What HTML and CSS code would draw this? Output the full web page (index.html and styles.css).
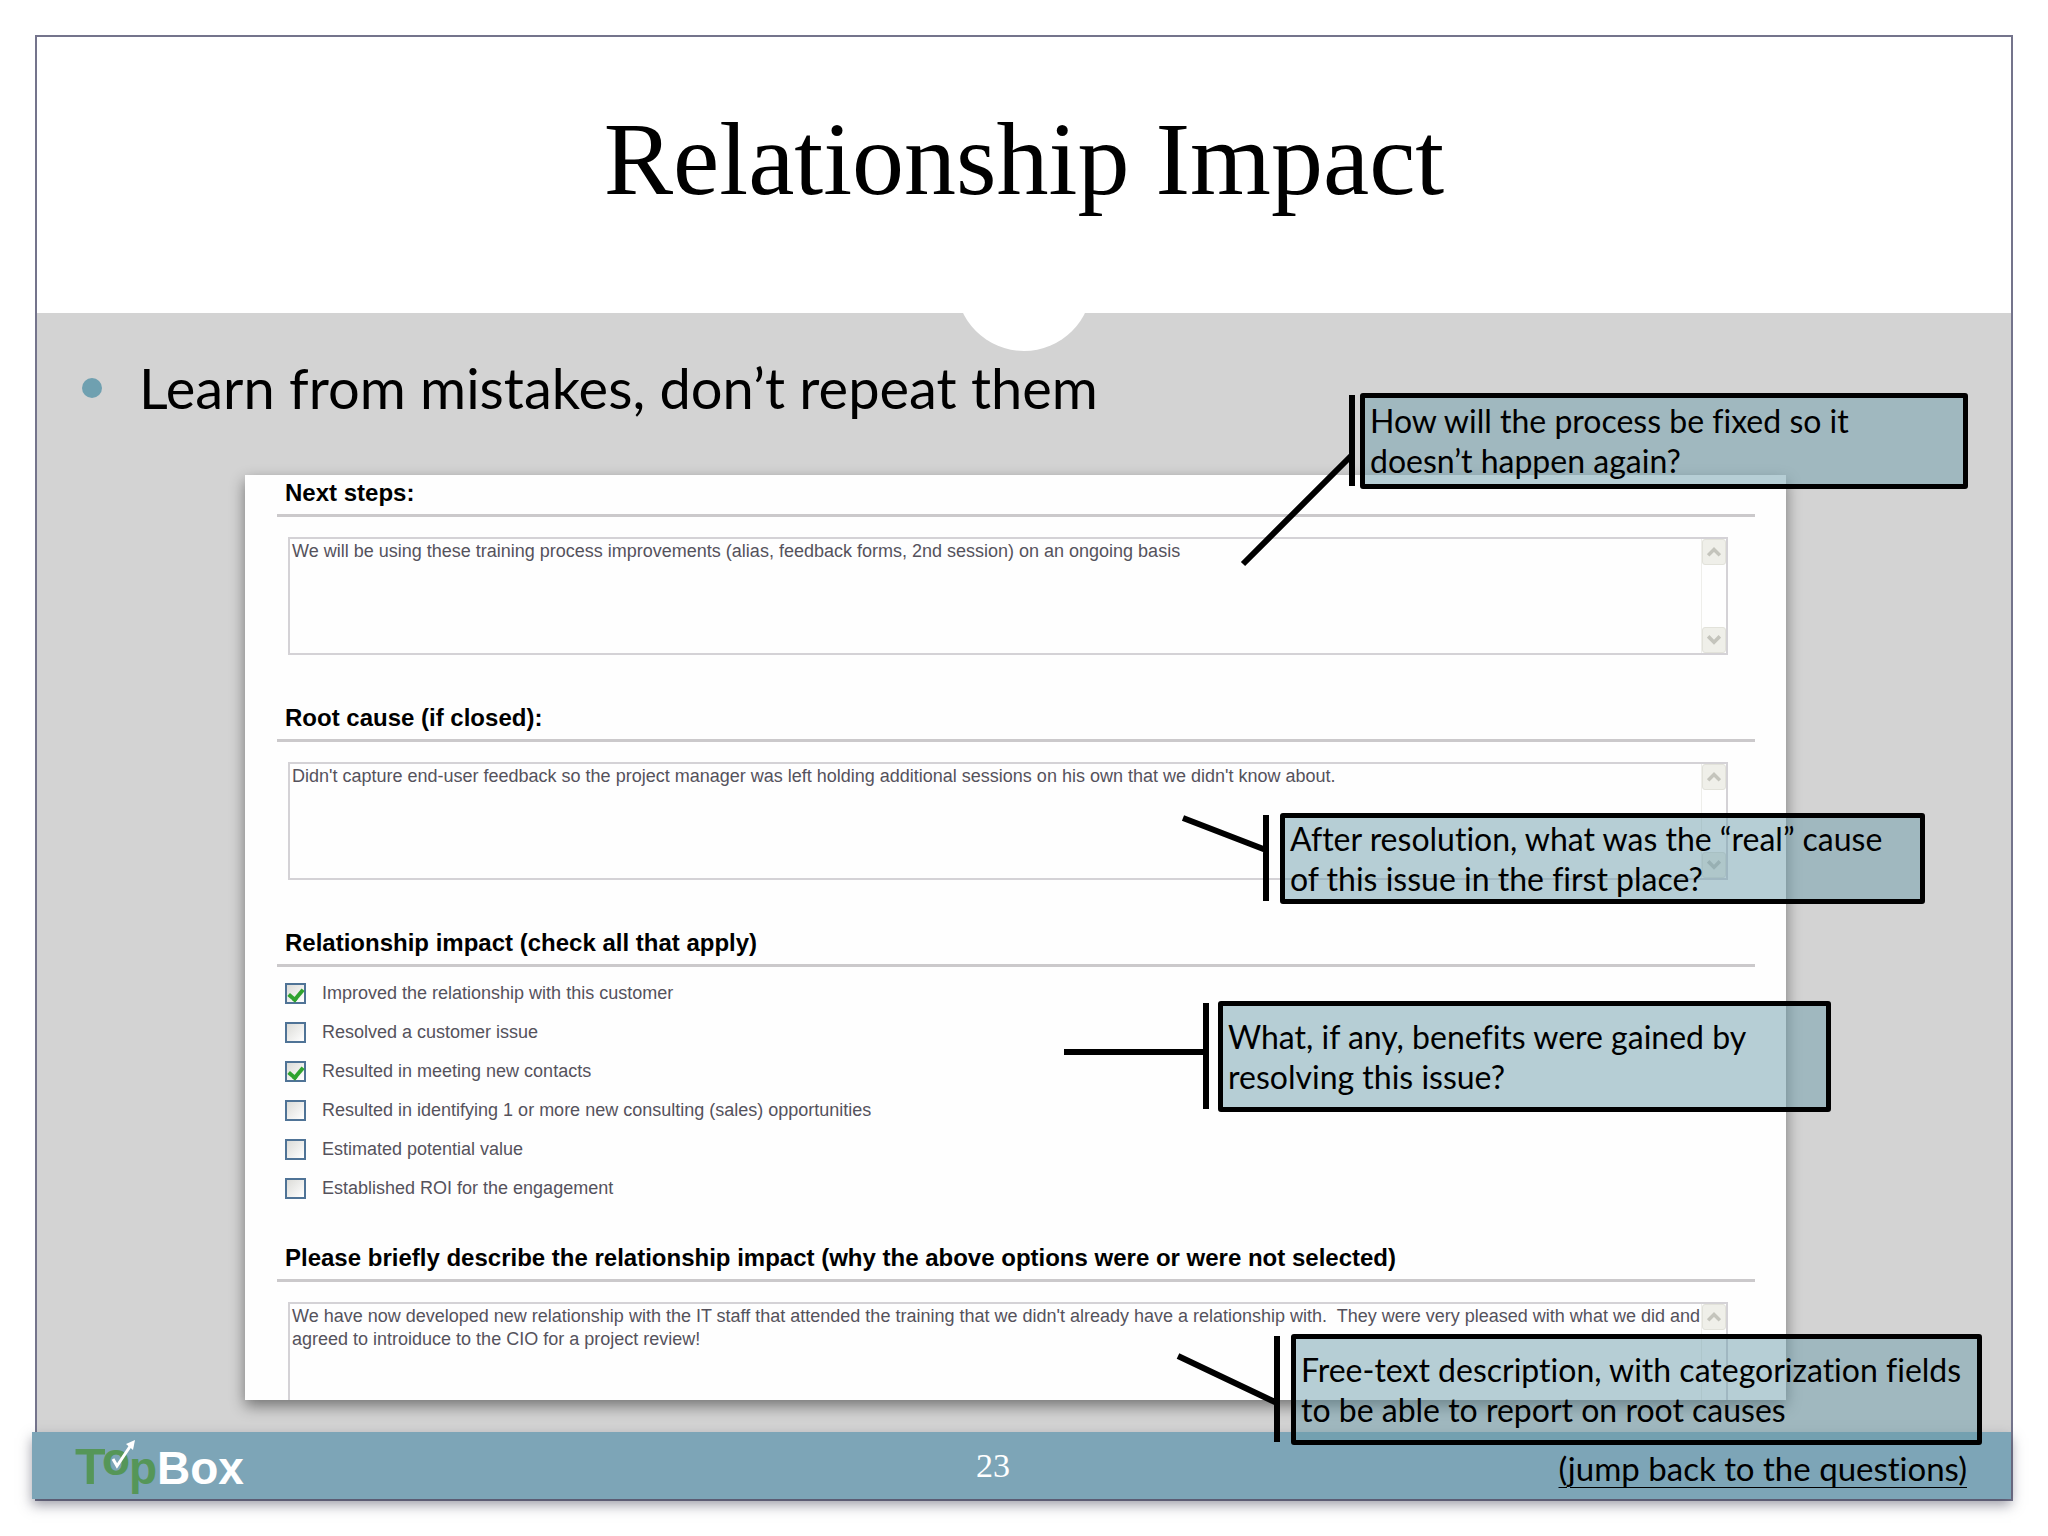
FILE: index.html
```html
<!DOCTYPE html>
<html lang="en">
  <head>
    <meta charset="UTF-8">
    <meta name="viewport" content="width=device-width, initial-scale=1.0">
    <title>Relationship Impact</title>
    <link rel="stylesheet" href="styles.css">
  </head>
  <body>
    <div class="slide">
      <!-- Title -->
      <header>
        <h1>Relationship Impact</h1>
      </header>
      <!-- Slide Content -->
      <main>
        <ul class="points">
          <li>Learn from mistakes, don’t repeat them</li>
        </ul>
        <form class="panel">
          <section>
            <h2><label for="nextSteps">Next steps:</label></h2>
            <div class="field">
              <textarea id="nextSteps">We will be using these training process improvements (alias, feedback forms, 2nd session) on an ongoing basis</textarea>
              <div class="scroll">
                <button type="button" aria-label="Scroll up"><svg viewBox="0 0 12 10"><path d="M1 8l5-5 5 5"/></svg></button>
                <button type="button" aria-label="Scroll down"><svg viewBox="0 0 12 10"><path d="M1 2l5 5 5-5"/></svg></button>
              </div>
            </div>
          </section>
          <section>
            <h2><label for="rootCause">Root cause (if closed):</label></h2>
            <div class="field">
              <textarea id="rootCause">Didn't capture end-user feedback so the project manager was left holding additional sessions on his own that we didn't know about.</textarea>
              <div class="scroll">
                <button type="button" aria-label="Scroll up"><svg viewBox="0 0 12 10"><path d="M1 8l5-5 5 5"/></svg></button>
                <button type="button" aria-label="Scroll down"><svg viewBox="0 0 12 10"><path d="M1 2l5 5 5-5"/></svg></button>
              </div>
            </div>
          </section>
          <section>
            <h2>Relationship impact (check all that apply)</h2>
            <div class="checks">
              <label><input type="checkbox" checked>Improved the relationship with this customer</label>
              <label><input type="checkbox">Resolved a customer issue</label>
              <label><input type="checkbox" checked>Resulted in meeting new contacts</label>
              <label><input type="checkbox">Resulted in identifying 1 or more new consulting (sales) opportunities</label>
              <label><input type="checkbox">Estimated potential value</label>
              <label><input type="checkbox">Established ROI for the engagement</label>
            </div>
          </section>
          <section>
            <h2><label for="describe">Please briefly describe the relationship impact (why the above options were or were not selected)</label></h2>
            <div class="field cut">
              <textarea id="describe">We have now developed new relationship with the IT staff that attended the training that we didn't already have a relationship with.  They were very pleased with what we did and agreed to introiduce to the CIO for a project review!</textarea>
              <div class="scroll">
                <button type="button" aria-label="Scroll up"><svg viewBox="0 0 12 10"><path d="M1 8l5-5 5 5"/></svg></button>
              </div>
            </div>
          </section>
        </form>
      </main>
      <!-- Footer -->
      <footer>
        <svg class="logo" viewBox="0 0 172 64" role="img" aria-label="TopBox">
          <text class="green" x="0" y="50" font-size="50">T</text>
          <text class="green" x="27" y="41" font-size="46">o</text>
          <text class="green" x="54" y="50" font-size="46">p</text>
          <text class="white" x="82" y="50" font-size="46">Box</text>
          <path class="tick" d="M38 25l4 7L56 11"/>
          <path class="tip" d="M60 6l-9 4 7 6z"/>
        </svg>
        <span class="page">23</span>
        <a href="#questions">(jump back to the questions)</a>
      </footer>
      <!-- Callouts -->
      <div class="callout fixed">
        <svg class="lead" viewBox="0 0 120 180"><path d="M112 2v91M112 62L3 171"/></svg>
        <p>How will the process be fixed so it<br>doesn’t happen again?</p>
      </div>
      <div class="callout cause">
        <svg class="lead" viewBox="0 0 120 180"><path d="M106 2v86M106 37L23 5"/></svg>
        <p>After resolution, what was the “real” cause<br>of this issue in the first place?</p>
      </div>
      <div class="callout benefits">
        <svg class="lead wide" viewBox="0 0 160 180"><path d="M148 2v106M148 51H6"/></svg>
        <p>What, if any, benefits were gained by<br>resolving this issue?</p>
      </div>
      <div class="callout describe">
        <svg class="lead" viewBox="0 0 120 180"><path d="M106 2v106M106 69L7 22"/></svg>
        <p>Free-text description, with categorization fields<br>to be able to report on root causes</p>
      </div>
    </div>
  </body>
</html>
```
FILE: styles.css
```css
/* General Styles */
* {
  box-sizing: border-box;
}

body {
  margin: 0;
  padding: 35px;
  background: white;
  color: black;
  font-family: Lato, sans-serif;
  font-variant-ligatures: none;
}

.slide {
  position: relative;
  border: 2px solid #74748c;
  background: #d3d3d3;
}

/* Title */
header {
  position: relative;
  display: flex;
  justify-content: center;
  height: 276px;
  padding-top: 62px;
  background: white;
}

header::after {
  content: "";
  position: absolute;
  left: calc(50% - 68px);
  bottom: -38px;
  width: 136px;
  height: 136px;
  border-radius: 50%;
  background: white;
}

h1 {
  position: relative;
  z-index: 1;
  margin: 0;
  font-family: Georgia, "Liberation Serif", serif;
  font-size: 104px;
  font-weight: normal;
  line-height: 120px;
}

/* Slide Content */
main {
  padding: 45px 225px 32px 208px;
}

.points {
  margin: 0 0 57px -163px;
  padding: 0;
  list-style: none;
  font-size: 56px;
  line-height: 60px;
}

.points li {
  display: flex;
  align-items: center;
  gap: 37px;
}

.points li::before {
  content: "";
  width: 20px;
  height: 20px;
  border-radius: 50%;
  background: #6fa0b0;
}

.panel {
  padding: 0 31px 0 32px;
  background: #fefefe;
  box-shadow: 0 6px 14px rgba(0, 0, 0, 0.45);
  font-family: Arial, "Liberation Sans", sans-serif;
}

.panel h2 {
  margin: 0;
  padding: 0 0 3px 8px;
  border-bottom: 3px solid #cbc9cb;
  font-size: 24px;
  line-height: 36px;
}

.field {
  display: flex;
  height: 118px;
  margin: 20px 27px 45px 11px;
  border: 2px solid #d4d2d6;
}

.field.cut {
  height: 98px;
  margin-bottom: 0;
  border-bottom: none;
}

.field textarea {
  flex: 1;
  padding: 1px 0 0 2px;
  border: none;
  outline: none;
  resize: none;
  overflow: hidden;
  background: none;
  color: #55525c;
  font: 18px/23px Arial, "Liberation Sans", sans-serif;
}

.scroll {
  display: flex;
  flex-direction: column;
  justify-content: space-between;
  width: 25px;
  border-left: 1px solid #eeeeea;
}

.scroll button {
  width: 24px;
  height: 26px;
  padding: 0;
  border: 1px solid #e2e2da;
  border-radius: 3px;
  background: #efefe9;
}

.scroll svg {
  display: block;
  width: 14px;
  margin: 0 auto;
  fill: none;
  stroke: #c4c4bc;
  stroke-width: 3;
}

.checks {
  padding: 7px 0 32px 8px;
}

.checks label {
  display: flex;
  align-items: center;
  gap: 16px;
  height: 39px;
  color: #55525c;
  font-size: 18px;
}

.checks input {
  appearance: none;
  width: 21px;
  height: 21px;
  margin: 0;
  border: 2px solid #4f7396;
  background: linear-gradient(135deg, #dcdcd8, #ffffff);
}

.checks input:checked::before {
  content: "";
  display: block;
  width: 6px;
  height: 11px;
  margin: 1px auto 0;
  border: solid #2fa32f;
  border-width: 0 4px 4px 0;
  transform: rotate(40deg);
}

/* Footer */
footer {
  display: grid;
  grid-template-columns: 1fr auto 1fr;
  align-items: center;
  height: 67px;
  margin-left: -5px;
  padding: 0 44px 0 43px;
  background: #7da5b7;
  box-shadow: 0 6px 12px rgba(60, 60, 80, 0.5);
}

.logo {
  width: 172px;
  height: 64px;
  font-family: Arial, "Liberation Sans", sans-serif;
  font-weight: bold;
}

.green {
  fill: #559658;
}

.white,
.tip {
  fill: white;
}

.tick {
  fill: none;
  stroke: white;
  stroke-width: 3;
}

.page {
  padding-right: 56px;
  color: white;
  font-family: Georgia, "Liberation Serif", serif;
  font-size: 34px;
}

footer a {
  justify-self: end;
  color: black;
  font-size: 33px;
  line-height: 40px;
  padding-top: 4px;
  text-decoration-thickness: 1px;
  text-underline-offset: 6px;
}

/* Callouts */
.callout {
  position: absolute;
  display: flex;
  align-items: center;
  padding-left: 5px;
  border: 5px solid black;
  border-radius: 3px;
  background: rgba(105, 155, 170, 0.48);
}

.callout p {
  margin: 0;
  font-size: 32px;
  line-height: 40px;
  white-space: nowrap;
}

.lead {
  position: absolute;
  top: -5px;
  left: -125px;
  width: 120px;
  height: 180px;
  fill: none;
  stroke: black;
  stroke-width: 6;
}

.lead.wide {
  left: -165px;
  width: 160px;
}

.fixed {
  top: 356px;
  right: 43px;
  width: 608px;
  height: 96px;
}

.cause {
  top: 776px;
  right: 86px;
  width: 645px;
  height: 91px;
}

.benefits {
  top: 964px;
  right: 180px;
  width: 613px;
  height: 111px;
}

.describe {
  top: 1297px;
  right: 29px;
  width: 691px;
  height: 111px;
}
```
